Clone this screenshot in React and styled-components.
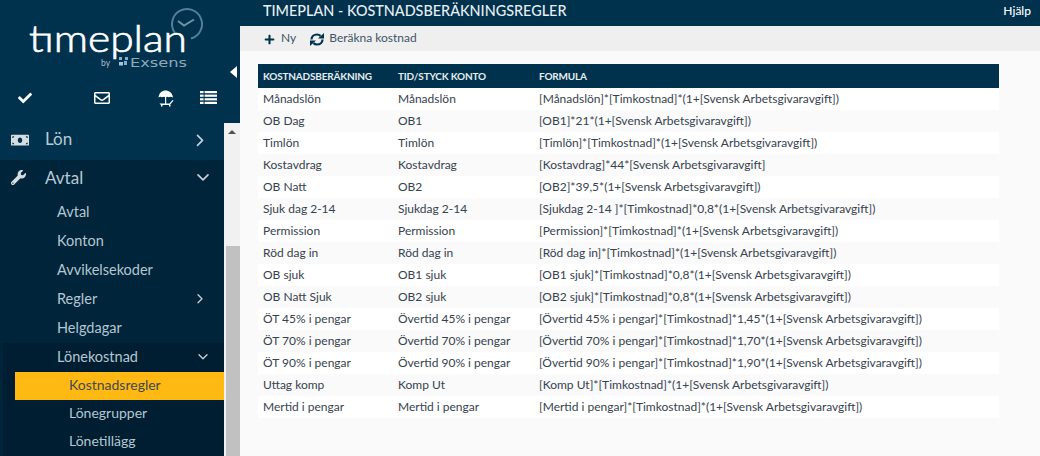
import React from "react";
import styled, { createGlobalStyle } from "styled-components";
import { FaCheck, FaWrench, FaMoneyBill, FaPlus, FaRegEnvelope } from "react-icons/fa";
import { ChevronRight, ChevronDown } from "lucide-react";

const Global = createGlobalStyle`
  html, body { margin: 0; padding: 0; width: 1040px; height: 456px; overflow: hidden; background: #fafafa; font-family: Lato, "Open Sans", sans-serif; }
`;
const Page = styled.div`display: flex; width: 1040px; height: 456px; overflow: hidden;`;
const Side = styled.aside`width: 240px; flex: none; display: flex; flex-direction: column;`;
const Brand = styled.div`height: 123px; flex: none; background: #00324e; position: relative; display: flex; flex-direction: column;`;
const LogoWrap = styled.div`height: 80px; flex: none; & svg { display: block; }`;
const IconRow = styled.div`display: grid; grid-template-columns: 76px 64px 42px 1fr; padding: 8px 0 0 18px; color: #fff; align-items: center; height: 20px;`;
const Collapse = styled.div`
  position: absolute; left: 230px; top: 66px; width: 0; height: 0;
  border-top: 6px solid transparent; border-bottom: 6px solid transparent; border-right: 7px solid #fff;
`;
const SideBody = styled.div`flex: 1; display: flex; min-height: 0;`;
const Menu = styled.nav`width: 224px; flex: none; background: #002439; display: flex; flex-direction: column; overflow: hidden; color: #b4c7d2;`;
const Top = styled.div`
  height: ${p => p.$open ? 38 : 37}px; flex: none; display: flex; align-items: center; position: relative; font-size: 17px; padding: 0 0 ${p => p.$open ? 4 : 6}px 45px; box-sizing: border-box;
  background: ${p => p.$open ? "#002439" : "#00324e"}; color: #b8c9d3;
`;
const TopIcon = styled.span`position: absolute; left: 11px; top: 50%; transform: translateY(-60%); display: flex; color: #d5dde2;`;
const Chevron = styled.span`position: absolute; left: ${p => p.$x}px; top: 50%; transform: translateY(-58%); display: flex; color: #c5d2da;`;
const Item = styled.div`height: 29px; flex: none; display: flex; align-items: center; position: relative; padding: 0 0 2px 57px; box-sizing: border-box; font-size: 14.5px;`;
const Group = styled.div`margin-left: 3px; background: #001e31; display: flex; flex-direction: column; flex: 1;`;
const GroupHead = styled(Item)`padding-left: 54px;`;
const SubItem = styled.div`
  height: 28px; flex: none; display: flex; align-items: center; margin-left: 12px; padding: 0 0 3px 54px; box-sizing: border-box; font-size: 14px;
  background: ${p => p.$active ? "#ffb912" : "transparent"}; color: ${p => p.$active ? "#3d4a52" : "#b4c7d2"};
`;
const Track = styled.div`width: 16px; flex: none; background: #f1f1f1; position: relative; display: flex; flex-direction: column; align-items: center;`;
const Arrow = styled.div`margin-top: 7px; width: 0; height: 0; border-left: 4px solid transparent; border-right: 4px solid transparent; border-bottom: 4px solid #505050;`;
const Thumb = styled.div`position: absolute; left: 2px; right: 0; top: 123px; bottom: 0; background: #c1c1c1;`;
const Main = styled.main`flex: 1; display: flex; flex-direction: column; min-width: 0;`;
const TopBar = styled.header`height: 26px; flex: none; background: #00324e; color: #fff; display: flex; align-items: center; justify-content: space-between; padding: 0 9px 5px 23px; box-sizing: border-box;`;
const Title = styled.h1`margin: 0; font-size: 14.4px; font-weight: 500; color: #e8eef1;`;
const Help = styled.a`font-size: 12px; font-weight: 500; color: #fff;`;
const Toolbar = styled.div`height: 25px; flex: none; background: #efefef; display: flex; align-items: center; padding: 0 0 3px 24px; box-sizing: border-box; gap: 13px; font-size: 12px; color: #3f5468;`;
const Tool = styled.span`display: flex; align-items: center; gap: ${p => p.$gap}px; & svg { color: #00324e; margin-top: 5px; }`;
const Content = styled.div`flex: 1; padding: 13px 41px 0 18px; background: #fafafa;`;
const Table = styled.table`width: 741px; border-collapse: collapse; table-layout: fixed; font-size: 12px; color: #36424e;`;
const Th = styled.th`
  height: 24px; padding: 0 0 0 5px; background: #00324e; color: #e6ecef; text-align: left; font-size: 10px; font-weight: 700; text-transform: uppercase; letter-spacing: -0.18px;
  width: ${p => p.$w ? `${p.$w}px` : "auto"};
`;
const Row = styled.tr`height: 22px; background: ${p => p.$alt ? "#fafafa" : "#ffffff"};`;
const Td = styled.td`padding: 0 0 1px 5px; white-space: nowrap; overflow: hidden;`;

const S = "Svensk Arbetsgivaravgift";
const rows = [
  ["Månadslön", "Månadslön", `[Månadslön]*[Timkostnad]*(1+[${S}])`],
  ["OB Dag", "OB1", `[OB1]*21*(1+[${S}])`],
  ["Timlön", "Timlön", `[Timlön]*[Timkostnad]*(1+[${S}])`],
  ["Kostavdrag", "Kostavdrag", `[Kostavdrag]*44*[${S}]`],
  ["OB Natt", "OB2", `[OB2]*39,5*(1+[${S}])`],
  ["Sjuk dag 2-14", "Sjukdag 2-14", `[Sjukdag 2-14 ]*[Timkostnad]*0,8*(1+[${S}])`],
  ["Permission", "Permission", `[Permission]*[Timkostnad]*(1+[${S}])`],
  ["Röd dag in", "Röd dag in", `[Röd dag in]*[Timkostnad]*(1+[${S}])`],
  ["OB sjuk", "OB1 sjuk", `[OB1 sjuk]*[Timkostnad]*0,8*(1+[${S}])`],
  ["OB Natt Sjuk", "OB2 sjuk", `[OB2 sjuk]*[Timkostnad]*0,8*(1+[${S}])`],
  ["ÖT 45% i pengar", "Övertid 45% i pengar", `[Övertid 45% i pengar]*[Timkostnad]*1,45*(1+[${S}])`],
  ["ÖT 70% i pengar", "Övertid 70% i pengar", `[Övertid 70% i pengar]*[Timkostnad]*1,70*(1+[${S}])`],
  ["ÖT 90% i pengar", "Övertid 90% i pengar", `[Övertid 90% i pengar]*[Timkostnad]*1,90*(1+[${S}])`],
  ["Uttag komp", "Komp Ut", `[Komp Ut]*[Timkostnad]*(1+[${S}])`],
  ["Mertid i pengar", "Mertid i pengar", `[Mertid i pengar]*[Timkostnad]*(1+[${S}])`],
];

const Logo = () => (
  <svg width="240" height="80" viewBox="0 0 240 80">
    <path d="M175 33A15 15 0 1 1 191 38.5" fill="none" stroke="#4f8299" strokeWidth="2" />
    <path d="M178 21l6 4.5 10-6" fill="none" stroke="#6b94a7" strokeWidth="2" />
    <text x="29" y="52" fontFamily="Lato, sans-serif" fontWeight="300" fontSize="38" fill="#fff" stroke="#fff" strokeWidth="0.7" textLength="158" lengthAdjust="spacingAndGlyphs">tımeplan</text>
    <text x="101" y="66" fontFamily="Lato, sans-serif" fontSize="8.5" fill="#a9bcc7">by</text>
    <rect x="119" y="57" width="3" height="3" fill="#7fb2d1" />
    <rect x="125" y="57" width="3" height="3" fill="#7fb2d1" />
    <rect x="119" y="62" width="4" height="3.5" fill="#a9c6d6" />
    <rect x="124" y="61" width="3" height="4" fill="#7fb2d1" />
    <text x="130" y="66.5" fontFamily="DejaVu Sans, sans-serif" fontSize="11.5" fill="#8fa9b8" textLength="57" lengthAdjust="spacingAndGlyphs">Exsens</text>
  </svg>
);

const Umbrella = () => (
  <svg width="18" height="17" viewBox="0 0 18 17" fill="#fff">
    <path d="M0.5 7.5C1 3 4 0.5 7.5 0.5S14.5 3 15 7.5Q12.5 6 11 7.3Q9 6 7.5 7.3Q6 6 4 7.3Q2.5 6 0.5 7.5Z" />
    <rect x="7" y="7" width="1.2" height="7" />
    <path d="M1.5 13.5h10l3-3.5 1 .6-3.5 4.4H3z" />
    <path d="M3 15h1.5v1.5H3zM11 15h1.5v1.5H11z" />
  </svg>
);

const ListIcon = () => (
  <svg width="17" height="14" viewBox="0 0 17 14" fill="#fff">
    <rect y="0" width="17" height="2.2" />
    <rect y="3.6" width="17" height="2.2" />
    <rect y="7.2" width="17" height="2.2" />
    <rect y="10.8" width="17" height="2.2" />
    <rect x="3.6" y="0" width="1" height="13" fill="#00324e" />
  </svg>
);

const SyncIcon = () => (
  <svg width="16" height="13" viewBox="0 0 16 13" fill="none">
    <path d="M2.5 6.5C2.5 3.5 5 1.5 8 1.5c1.5 0 2.6.5 3.5 1.4" stroke="#00324e" strokeWidth="2.2" />
    <path d="M9 5.5h6V0z" fill="#00324e" />
    <path d="M13.5 6.5c0 3-2.5 5-5.5 5-1.5 0-2.6-.5-3.5-1.4" stroke="#00324e" strokeWidth="2.2" />
    <path d="M7 7.5H1V13z" fill="#00324e" />
  </svg>
);

export default function App() {
  return (
    <Page>
      <Global />
      <Side>
        <Brand>
          <LogoWrap><Logo /></LogoWrap>
          <IconRow>
            <FaCheck size={14} />
            <FaRegEnvelope size={16} />
            <Umbrella />
            <ListIcon />
          </IconRow>
          <Collapse />
        </Brand>
        <SideBody>
          <Menu>
            <Top>
              <TopIcon><FaMoneyBill size={18} /></TopIcon>Lön
              <Chevron $x={190}><ChevronRight size={20} /></Chevron>
            </Top>
            <Top $open>
              <TopIcon><FaWrench size={15} /></TopIcon>Avtal
              <Chevron $x={193}><ChevronDown size={20} /></Chevron>
            </Top>
            <Item>Avtal</Item>
            <Item>Konton</Item>
            <Item>Avvikelsekoder</Item>
            <Item>Regler<Chevron $x={192}><ChevronRight size={16} /></Chevron></Item>
            <Item>Helgdagar</Item>
            <Group>
              <GroupHead>Lönekostnad<Chevron $x={192}><ChevronDown size={16} /></Chevron></GroupHead>
              <SubItem $active>Kostnadsregler</SubItem>
              <SubItem>Lönegrupper</SubItem>
              <SubItem>Lönetillägg</SubItem>
            </Group>
          </Menu>
          <Track><Arrow /><Thumb /></Track>
        </SideBody>
      </Side>
      <Main>
        <TopBar><Title>TIMEPLAN - KOSTNADSBERÄKNINGSREGLER</Title><Help>Hjälp</Help></TopBar>
        <Toolbar>
          <Tool $gap={6}><FaPlus size={11} />Ny</Tool>
          <Tool $gap={4}><SyncIcon />Beräkna kostnad</Tool>
        </Toolbar>
        <Content>
          <Table>
            <thead>
              <tr>
                <Th $w={130}>Kostnadsberäkning</Th>
                <Th $w={136}>Tid/Styck konto</Th>
                <Th>Formula</Th>
              </tr>
            </thead>
            <tbody>
              {rows.map((r, i) => (
                <Row key={r[0]} $alt={i % 2 === 1}>
                  <Td>{r[0]}</Td><Td>{r[1]}</Td><Td>{r[2]}</Td>
                </Row>
              ))}
            </tbody>
          </Table>
        </Content>
      </Main>
    </Page>
  );
}
